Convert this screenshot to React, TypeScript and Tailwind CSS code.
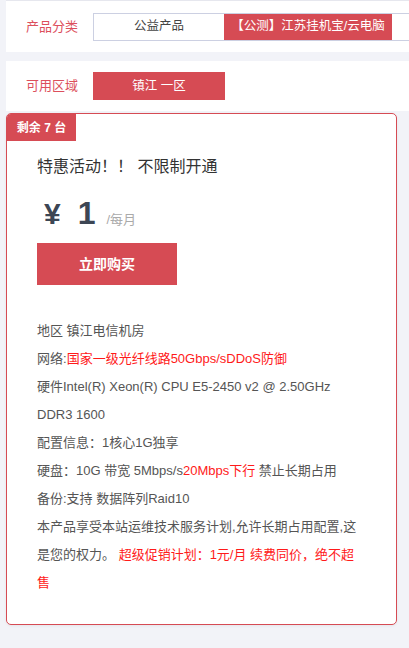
import React from 'react';

const FONT = { fontFamily: '"Liberation Sans", "Noto Sans CJK SC", sans-serif' };

const specs: React.ReactNode[] = [
  <>地区 镇江电信机房</>,
  <>
    网络:<span className="text-[#ff1a1a]">国家一级光纤线路50Gbps/sDDoS防御</span>
  </>,
  <>硬件Intel(R) Xeon(R) CPU E5-2450 v2 @ 2.50GHz</>,
  <>DDR3 1600</>,
  <>配置信息：1核心1G独享</>,
  <>
    硬盘：10G 带宽 5Mbps/s<span className="text-[#ff1a1a]">20Mbps下行</span> 禁止长期占用
  </>,
  <>备份:支持 数据阵列Raid10</>,
  <>本产品享受本站运维技术服务计划,允许长期占用配置,这</>,
  <>
    是您的权力。 <span className="text-[#ff1a1a]">超级促销计划：1元/月 续费同价，绝不超</span>
  </>,
  <span className="text-[#ff1a1a]">售</span>,
];

export default function App() {
  return (
    <div className="w-[409px] min-h-[648px] bg-[#f2f3f8] overflow-hidden text-[#555]" style={FONT}>
      {/* product category */}
      <div className="ml-[6px] w-[430px] h-[52px] bg-white flex items-center pl-[20px] border-t border-[#e6e7ee]">
        <span className="w-[67px] text-[13px] text-[#dc4f5c]">产品分类</span>
        <div className="flex h-[28px] w-[330px] border border-[#ccd0e2]">
          <div className="w-[130px] flex items-center justify-center text-[12.5px] text-[#444]">公益产品</div>
          <div className="w-[168px] flex items-center justify-center bg-[#d64b54] text-white text-[12.5px]">
            【公测】江苏挂机宝/云电脑
          </div>
        </div>
      </div>

      {/* region */}
      <div className="ml-[6px] mt-[9px] w-[430px] h-[50px] bg-white flex items-center pl-[20px]">
        <span className="w-[67px] text-[13px] text-[#dc4f5c]">可用区域</span>
        <div className="w-[132px] h-[28px] flex items-center justify-center bg-[#d64b54] text-white text-[12.5px]">
          镇江 一区
        </div>
      </div>

      {/* product card */}
      <div className="ml-[6px] mt-[2px] w-[391px] bg-white border border-[#d64b54] rounded-[5px] overflow-hidden shadow-[0_1px_3px_rgba(0,0,0,0.06)]">
        <div className="w-[69px] h-[27px] bg-[#d64b54] text-white text-[12px] font-bold flex items-center justify-center">
          剩余 7 台
        </div>
        <div className="px-[30px] pb-[27px]">
          <div className="mt-[16px] text-[16px] text-[#333] leading-[20px]">特惠活动！！ 不限制开通</div>
          <div className="mt-[12px] flex items-baseline pl-[7px] h-[40px]">
            <span className="text-[30px] font-bold text-[#3d4654]">¥</span>
            <span className="ml-[17px] text-[32px] font-bold text-[#3d4654]">1</span>
            <span className="ml-[11px] text-[13px] text-[#aaa]">/每月</span>
          </div>
          <button className="mt-[14px] w-[140px] h-[42px] bg-[#d64b54] text-white text-[14px] font-bold">立即购买</button>
          <div className="mt-[32px] text-[13px] leading-[28px] text-[#555]">
            {specs.map((s, i) => (
              <div key={i}>{s}</div>
            ))}
          </div>
        </div>
      </div>
    </div>
  );
}
